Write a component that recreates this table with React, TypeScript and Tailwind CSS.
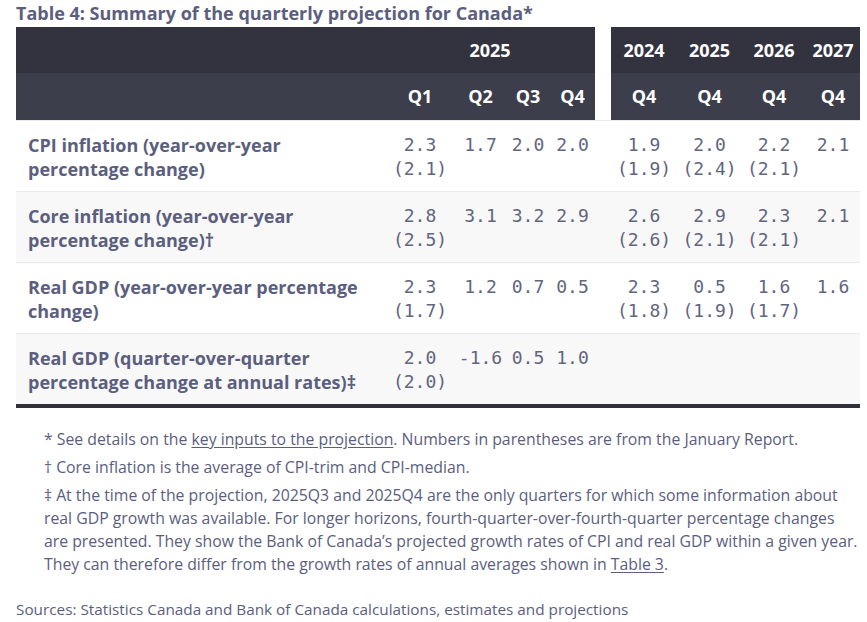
import React from "react";

type Row = {
  label: React.ReactNode;
  quarters: [string, string?][];
  years: [string, string?][];
  shaded?: boolean;
};

const rows: Row[] = [
  {
    label: "CPI inflation (year-over-year percentage change)",
    quarters: [["2.3", "(2.1)"], ["1.7"], ["2.0"], ["2.0"]],
    years: [["1.9", "(1.9)"], ["2.0", "(2.4)"], ["2.2", "(2.1)"], ["2.1"]],
  },
  {
    label: "Core inflation (year-over-year percentage change)†",
    quarters: [["2.8", "(2.5)"], ["3.1"], ["3.2"], ["2.9"]],
    years: [["2.6", "(2.6)"], ["2.9", "(2.1)"], ["2.3", "(2.1)"], ["2.1"]],
    shaded: true,
  },
  {
    label: "Real GDP (year-over-year percentage change)",
    quarters: [["2.3", "(1.7)"], ["1.2"], ["0.7"], ["0.5"]],
    years: [["2.3", "(1.8)"], ["0.5", "(1.9)"], ["1.6", "(1.7)"], ["1.6"]],
  },
  {
    label: "Real GDP (quarter-over-quarter percentage change at annual rates)‡",
    quarters: [["2.0", "(2.0)"], ["-1.6"], ["0.5"], ["1.0"]],
    years: [[""], [""], [""], [""]],
    shaded: true,
  },
];

const NumCell = ({ v }: { v: [string, string?] }) => (
  <td className="align-top text-center pt-3 pb-[10px] px-0 font-['DejaVu_Sans_Mono',monospace] text-[18px] leading-6 text-[#62657f] whitespace-nowrap">
    <div>{v[0]}</div>
    {v[1] && <div>{v[1]}</div>}
  </td>
);

export default function App() {
  return (
    <div className="min-h-screen bg-white font-['Open_Sans',sans-serif] text-[#5b5e7e] pl-4">
      <div className="w-[844px]">
        <h2 className="text-[18px] font-bold leading-6 mt-[1px] mb-[2px]">
          Table 4: Summary of the quarterly projection for Canada*
        </h2>

        <table className="table-fixed w-[844px] border-collapse border-b-4 border-[#2f303c]">
          <colgroup>
            <col className="w-[369px]" />
            <col className="w-[70px]" />
            <col className="w-[51px]" />
            <col className="w-[44px]" />
            <col className="w-[45px]" />
            <col className="w-[16px]" />
            <col className="w-[66px]" />
            <col className="w-[65px]" />
            <col className="w-[64px]" />
            <col className="w-[54px]" />
          </colgroup>
          <thead className="text-white text-[18px] font-bold">
            <tr className="h-[46px] bg-[#33333f]">
              <th />
              <th colSpan={4} className="text-center">2025</th>
              <th className="bg-white" />
              <th className="text-center">2024</th>
              <th className="text-center">2025</th>
              <th className="text-center">2026</th>
              <th className="text-center">2027</th>
            </tr>
            <tr className="h-[47px] bg-[#3d3e4b]">
              <th />
              <th className="text-center">Q1</th>
              <th className="text-center">Q2</th>
              <th className="text-center">Q3</th>
              <th className="text-center">Q4</th>
              <th className="bg-white" />
              <th className="text-center">Q4</th>
              <th className="text-center">Q4</th>
              <th className="text-center">Q4</th>
              <th className="text-center">Q4</th>
            </tr>
          </thead>
          <tbody>
            {rows.map((r, i) => (
              <tr
                key={i}
                className={
                  (r.shaded ? "bg-[#f8f8f8]" : "bg-white") +
                  " border-t border-[#e9e9ec]"
                }
              >
                <td className="align-top pt-3 pb-[10px] pl-3 pr-2 text-[18px] leading-6 font-bold">
                  {r.label}
                </td>
                {r.quarters.map((q, j) => (
                  <NumCell key={j} v={q} />
                ))}
                <td />
                {r.years.map((y, j) => (
                  <NumCell key={j} v={y} />
                ))}
              </tr>
            ))}
          </tbody>
        </table>

        <ul className="mt-[20px] pl-7 text-[15.8px] leading-[23px] space-y-[5px]">
          <li>
            * See details on the{" "}
            <span className="underline underline-offset-2">key inputs to the projection</span>.
            Numbers in parentheses are from the January Report.
          </li>
          <li>† Core inflation is the average of CPI-trim and CPI-median.</li>
          <li>
            ‡ At the time of the projection, 2025Q3 and 2025Q4 are the only quarters for
            which some information about real GDP growth was available. For longer horizons,
            fourth-quarter-over-fourth-quarter percentage changes are presented. They show the
            Bank of Canada’s projected growth rates of CPI and real GDP within a given year.
            They can therefore differ from the growth rates of annual averages shown in{" "}
            <span className="underline underline-offset-2">Table 3</span>.
          </li>
        </ul>

        <p className="mt-[22px] text-[15.3px] leading-[23px]">
          Sources: Statistics Canada and Bank of Canada calculations, estimates and projections
        </p>
      </div>
    </div>
  );
}
